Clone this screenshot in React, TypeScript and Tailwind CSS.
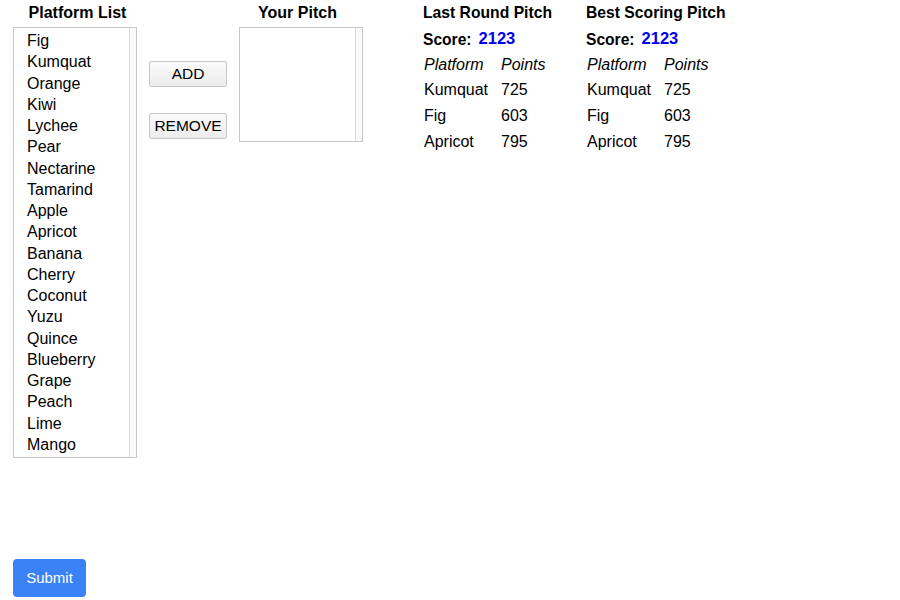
const platforms = [
  "Fig", "Kumquat", "Orange", "Kiwi", "Lychee", "Pear", "Nectarine", "Tamarind",
  "Apple", "Apricot", "Banana", "Cherry", "Coconut", "Yuzu", "Quince",
  "Blueberry", "Grape", "Peach", "Lime", "Mango",
];

const pitch = [
  { name: "Kumquat", points: 725 },
  { name: "Fig", points: 603 },
  { name: "Apricot", points: 795 },
];

const ListBox = ({ items, height }: { items: string[]; height: string }) => (
  <div className={`flex ${height} border border-[#c6c6c6] bg-white`}>
    <ul className="flex-1 pt-[2px] pl-[13px]">
      {items.map((item) => (
        <li key={item} className="h-[21.25px] leading-[21.25px] text-[16px] text-black">
          {item}
        </li>
      ))}
    </ul>
    <div className="w-[7px] border-l border-[#dcdcdc] bg-[#fafafa]" />
  </div>
);

const PitchPanel = ({ title }: { title: string }) => (
  <div className="w-[163px] text-[16px] text-black">
    <h2 className="h-[26px] leading-[26px] text-[15.7px] font-bold">{title}</h2>
    <div className="flex items-center h-[27px] gap-[7px]">
      <span className="text-[15.6px] font-bold">Score:</span>
      <span className="text-[16.5px] font-bold text-[#0000ee] -mt-[2px]">2123</span>
    </div>
    <table className="border-collapse">
      <thead>
        <tr className="h-[24px] italic">
          <td className="w-[77px] pl-[1px] font-normal">Platform</td>
          <td className="pl-[1px] font-normal">Points</td>
        </tr>
      </thead>
      <tbody>
        {pitch.map((row) => (
          <tr key={row.name} className="h-[26px]">
            <td className="pl-[1px]">{row.name}</td>
            <td className="pl-[1px]">{row.points}</td>
          </tr>
        ))}
      </tbody>
    </table>
  </div>
);

const GrayButton = ({ label }: { label: string }) => (
  <button className="h-[26px] w-[78px] border border-[#c8c8c8] rounded-[2px] bg-gradient-to-b from-[#fbfbfb] to-[#ececec] text-[15.5px] text-black">
    {label}
  </button>
);

export default function App() {
  return (
    <div className="w-[900px] h-[600px] bg-white font-['Liberation_Sans',Arial,sans-serif] px-[13px]">
      <div className="flex items-start">
        <div className="w-[124px]">
          <h2 className="h-[27px] leading-[26px] pl-[5px] text-center text-[16px] font-bold">Platform List</h2>
          <ListBox items={platforms} height="h-[431px]" />
        </div>

        <div className="flex flex-col gap-[26px] ml-[12px] pt-[61px]">
          <GrayButton label="ADD" />
          <GrayButton label="REMOVE" />
        </div>

        <div className="w-[124px] ml-[12px]">
          <h2 className="h-[27px] leading-[26px] pr-[7px] text-center text-[16px] font-bold">Your Pitch</h2>
          <ListBox items={[]} height="h-[115px]" />
        </div>

        <div className="flex ml-[60px]">
          <PitchPanel title="Last Round Pitch" />
          <PitchPanel title="Best Scoring Pitch" />
        </div>
      </div>

      <button className="mt-[101px] h-[38px] w-[73px] rounded-[4px] bg-[#3b82f6] text-white text-[15px]">
        Submit
      </button>
    </div>
  );
}
